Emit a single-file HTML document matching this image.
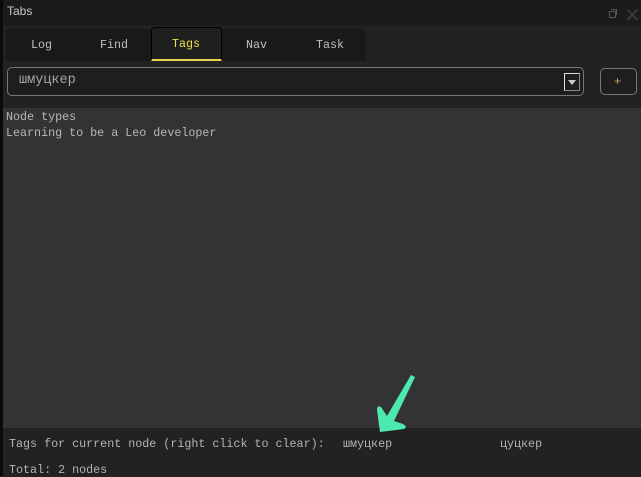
<!DOCTYPE html>
<html><head><meta charset="utf-8"><style>
*{margin:0;padding:0;box-sizing:border-box}
body{width:641px;height:476px;background:#222;overflow:hidden;position:relative;font-family:"Liberation Mono","DejaVu Sans Mono",monospace;font-size:11.7px;color:#b4b4b4}
.abs{position:absolute}
</style></head><body>
<div class="abs" style="left:0;top:0;width:3px;height:476px;background:#0a0a0a"></div>
<div class="abs" style="left:3px;top:0;width:638px;height:26px;background:#1b1b1b"></div>
<div class="abs" style="left:7px;top:4px;font-family:'Liberation Sans',sans-serif;font-size:12px;color:#c8c8c8">Tabs</div>
<div class="abs" style="left:609px;top:11px;width:7px;height:7px;border:1px solid #555"></div>
<div class="abs" style="left:611px;top:9px;width:6px;height:6px;border-top:1px solid #555;border-right:1px solid #555"></div>
<div class="abs" style="left:624px;top:6px;font-family:'Liberation Sans',sans-serif;font-size:20px;color:#3a3a3a;line-height:20px">✕</div>
<div class="abs" style="left:3px;top:26px;width:638px;height:36px;background:#222"></div>
<div class="abs" style="left:6px;top:29px;width:360px;height:32px;background:#191919;border-radius:4px 4px 0 0"></div>
<div class="abs" style="left:151px;top:27px;width:71px;height:34px;background:#1f1f1f;border:1px solid #000;border-bottom:2px solid #e6d44a;border-radius:4px 4px 0 0"></div>
<div class="abs" style="left:31px;top:38px;color:#c0c0c0">Log</div>
<div class="abs" style="left:100px;top:38px;color:#c0c0c0">Find</div>
<div class="abs" style="left:172px;top:37px;color:#f0e24a">Tags</div>
<div class="abs" style="left:246px;top:38px;color:#c0c0c0">Nav</div>
<div class="abs" style="left:316px;top:38px;color:#c0c0c0">Task</div>
<div class="abs" style="left:7px;top:67px;width:577px;height:29px;border:1px solid #777;border-radius:5px;background:#1e1e1e"></div>
<div class="abs" style="left:19px;top:73px;font-size:13.5px;color:#a8a8a8">шмуцкер</div>
<div class="abs" style="left:564px;top:73px;width:16px;height:18px;border:1px solid #ddd;border-right-color:#888;border-bottom-color:#888;background:#1e1e1e"></div>
<div class="abs" style="left:568px;top:80px;width:0;height:0;border-left:4px solid transparent;border-right:4px solid transparent;border-top:5px solid #ccc"></div>
<div class="abs" style="left:600px;top:68px;width:37px;height:27px;border:1px solid #777;border-radius:5px;background:#1e1e1e"></div>
<div class="abs" style="left:614px;top:75px;color:#c8a060;font-size:12px">+</div>
<div class="abs" style="left:3px;top:108px;width:638px;height:320px;background:#333335"></div>
<div class="abs" style="left:6px;top:109px;line-height:16px;color:#b8b8b8">Node types<br>Learning to be a Leo developer</div>
<div class="abs" style="left:9px;top:437px;color:#b4b4b4">Tags for current node (right click to clear):</div>
<div class="abs" style="left:343px;top:437px;color:#b4b4b4">шмуцкер</div>
<div class="abs" style="left:500px;top:437px;color:#b4b4b4">цуцкер</div>
<div class="abs" style="left:9px;top:463px;color:#b4b4b4">Total: 2 nodes</div>
<svg class="abs" style="left:0;top:0" width="641" height="476">
<path d="M380 432 L377 410 Q377 405 381 407 L387 416 L411 375 L415 377 L394 421 L403 424 Q408 427 404 429 Z" fill="#4deab0"/>
</svg>
</body></html>
